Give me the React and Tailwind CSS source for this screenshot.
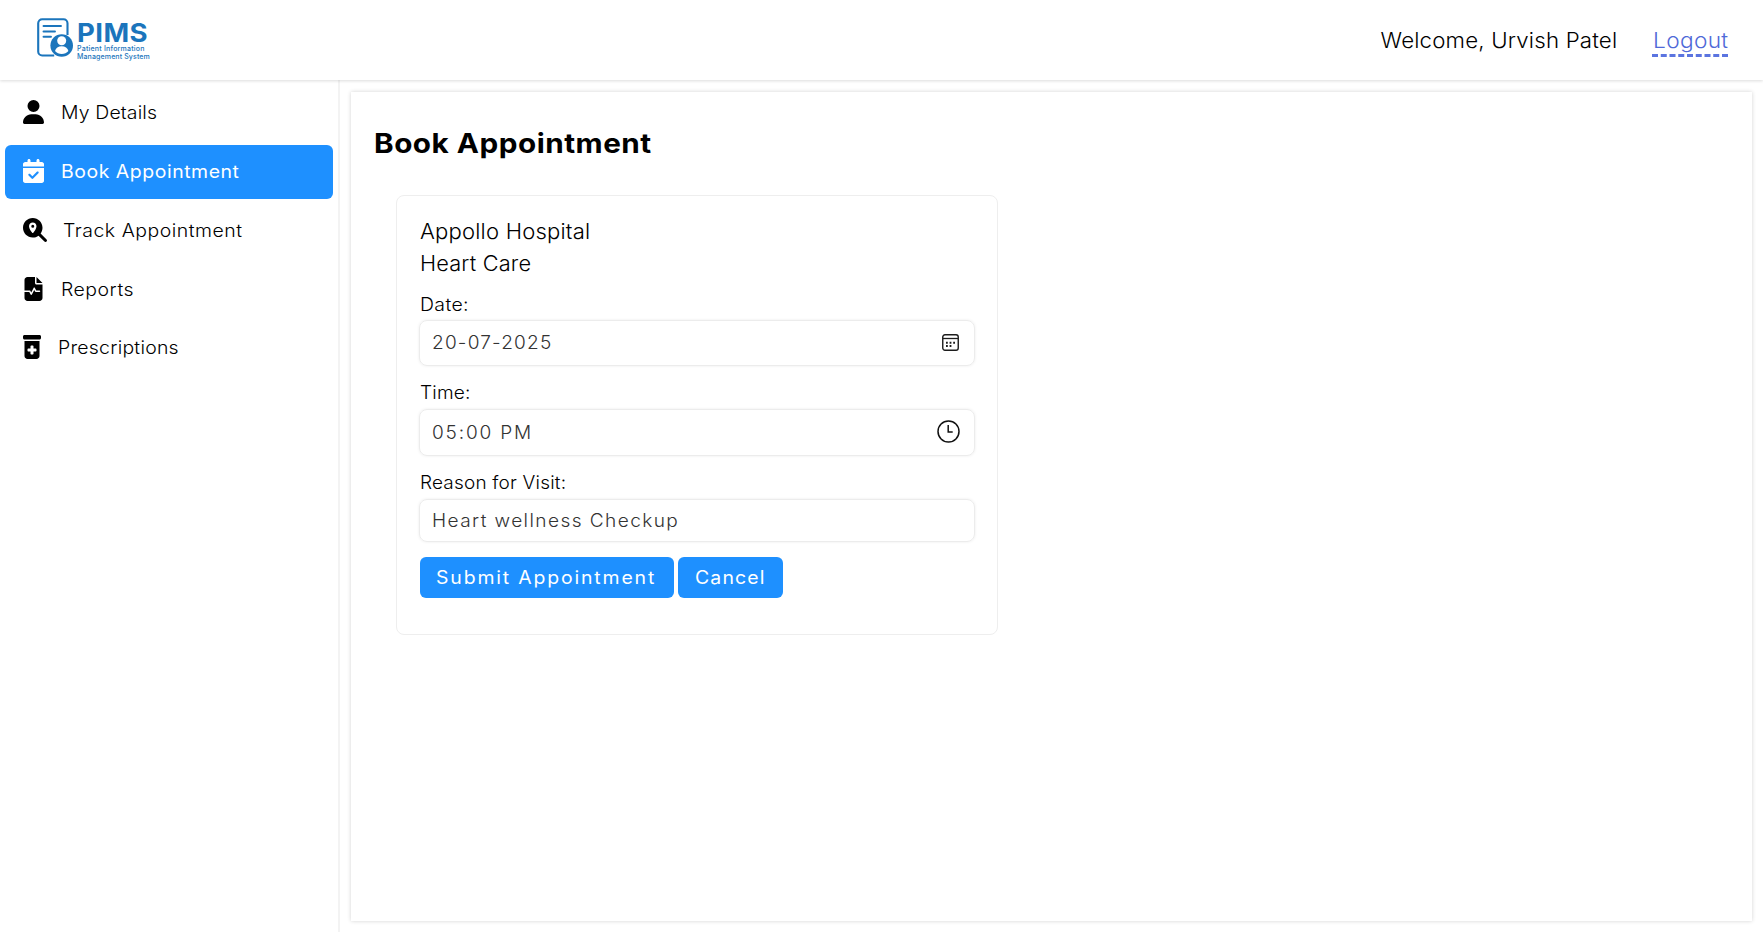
import {
  FaUser,
  FaCalendarCheck,
  FaMagnifyingGlassLocation,
  FaFileWaveform,
  FaPrescriptionBottleMedical,
} from "react-icons/fa6";

const NAV = [
  { label: "My Details", Icon: FaUser, box: "w-[38px]", size: "w-[21px]", tracking: "tracking-[0.13px]" },
  { label: "Book Appointment", Icon: FaCalendarCheck, box: "w-[38px]", size: "w-[21px]", tracking: "tracking-[0.5px]", active: true },
  { label: "Track Appointment", Icon: FaMagnifyingGlassLocation, box: "w-[40px]", size: "w-6", tracking: "tracking-[0.48px]" },
  { label: "Reports", Icon: FaFileWaveform, box: "w-[38px]", size: "w-[21px]", tracking: "tracking-[0.47px]" },
  { label: "Prescriptions", Icon: FaPrescriptionBottleMedical, box: "w-[35px]", size: "w-[18px]", tracking: "tracking-[0.22px]" },
];

function Logo() {
  return (
    <div className="flex items-start text-[#1b75bc]">
      <svg width="37" height="39" viewBox="0 0 37 39" fill="none">
        <path
          d="M30.500 17V5.200a4 4 0 0 0-4-4H5.200a4 4 0 0 0-4 4v28.300a4 4 0 0 0 4 4h12"
          stroke="currentColor"
          strokeWidth="2.1"
        />
        <path d="M6.500 8h17.500M6.500 13.500h11.500M6.500 18.800h7.500" stroke="currentColor" strokeWidth="1.9" strokeLinecap="round" />
        <circle cx="24.700" cy="27.500" r="11.300" fill="currentColor" />
        <circle cx="24.700" cy="22.800" r="4.500" fill="#fff" />
        <path d="M18 33c.7-3.200 3.300-4.800 6.700-4.800s6 1.600 6.700 4.800c-1.700 1.900-4 3-6.700 3s-5-1.100-6.700-3Z" fill="#fff" />
      </svg>
      <div className="flex flex-col pt-[2px] pl-[3px]">
        <span className="h-[25px] origin-left scale-x-[1.06] text-[26px] leading-[26px] font-bold tracking-[0.4px]">PIMS</span>
        <span className="h-[8px] text-[7px] leading-[8px] font-medium tracking-[0.22px] whitespace-nowrap">Patient Information</span>
        <span className="h-[8px] text-[7px] leading-[8px] font-medium tracking-[0.13px] whitespace-nowrap">Management System</span>
      </div>
    </div>
  );
}

function Header() {
  return (
    <header className="relative flex h-20 shrink-0 items-start justify-between bg-white pr-[35px] pl-[37px] shadow-[0_1px_3px_rgba(0,0,0,0.14)]">
      <div className="pt-[18px]">
        <Logo />
      </div>
      <div className="flex items-start pt-[25px] text-[21px] leading-8">
        <span className="mr-[35px] origin-right scale-x-[1.06] tracking-[0.17px]">Welcome, Urvish Patel</span>
        <a href="#" className="h-[32px] w-[76px] border-b-[3px] border-dashed border-[#5b74e0] pl-px text-[#4f69d8]">
          <span className="block origin-left scale-x-[1.08] tracking-[0.3px]">Logout</span>
        </a>
      </div>
    </header>
  );
}

function Sidebar() {
  return (
    <nav className="flex w-[340px] shrink-0 flex-col gap-[5px] border-r-2 border-[#f3f3f3] pt-[6.300px] pr-[4.600px] pl-[5.400px]">
      {NAV.map(({ label, Icon, box, size, tracking, active }) => (
        <a
          key={label}
          href="#"
          className={`flex h-[53.800px] shrink-0 items-center rounded-md pl-[17.600px] text-lg ${tracking} ${active ? "bg-[#1e90ff] font-normal text-white" : "text-black"}`}
        >
          <span className={`flex shrink-0 pb-[2px] ${box}`}>
            <Icon className={`h-6 ${size}`} />
          </span>
          <span className="origin-left scale-x-[1.08]">{label}</span>
        </a>
      ))}
    </nav>
  );
}

function CalendarIcon() {
  return (
    <svg className="mr-[3px] -mt-[2px]" width="17" height="17" viewBox="0 0 17 17" fill="none" stroke="#1c1c1c">
      <rect x="0.750" y="0.750" width="15.500" height="15.500" rx="2.200" strokeWidth="1.400" />
      <path d="M1 4.500h15" strokeWidth="1.300" />
      <path d="M4 8.700h1.800M7.600 8.700h1.800M11.200 8.700h1.800M4 12h1.800M7.600 12h1.800" strokeWidth="1.900" />
    </svg>
  );
}

function ClockIcon() {
  return (
    <svg className="mr-[1.500px] -mt-[2px]" width="23" height="23" viewBox="0 0 23 23" fill="none" stroke="#111">
      <circle cx="11.500" cy="11.500" r="10.500" strokeWidth="1.500" />
      <path d="M11.200 5v7h4.500" strokeWidth="1.500" />
    </svg>
  );
}

function Field({ label, labelClass, boxClass, value, valueClass, icon }) {
  return (
    <>
      <label className={`block h-[30px] w-fit origin-left leading-[30px] text-black ${labelClass}`}>{label}</label>
      <div
        className={`-ml-px flex w-[556px] items-center justify-between rounded-lg border border-[#ececec] pr-[12px] pl-[12px] text-[#333] shadow-[0_0_3px_rgba(0,0,0,0.08)] ${boxClass}`}
      >
        <span className={`origin-left scale-x-[1.06] ${valueClass}`}>{value}</span>
        {icon}
      </div>
    </>
  );
}

function AppointmentForm() {
  return (
    <section className="mt-[33.500px] ml-[22px] h-[440px] w-[602px] rounded-lg border border-[#eeeeee] pt-[20.500px] pl-[22.600px] text-lg text-black">
      <p className="w-fit origin-left scale-x-[1.05] text-[21px] leading-[31.500px] tracking-[0.19px]">Appollo Hospital</p>
      <p className="w-fit origin-left scale-x-[1.035] text-[21px] leading-[31.500px] tracking-[0.17px]">Heart Care</p>
      <Field
        label="Date:"
        labelClass="mt-[11px] scale-x-[1.08] tracking-[0.35px]"
        boxClass="h-[46px]"
        value="20-07-2025"
        valueClass="tracking-[1.1px]"
        icon={<CalendarIcon />}
      />
      <Field
        label="Time:"
        labelClass="mt-[12px] scale-x-[1.06] tracking-[0.15px]"
        boxClass="mt-[1px] h-[47px]"
        value="05:00 PM"
        valueClass="tracking-[1.7px]"
        icon={<ClockIcon />}
      />
      <Field
        label="Reason for Visit:"
        labelClass="mt-[12px] scale-x-[1.055] tracking-[0.18px]"
        boxClass="mt-[1px] h-[43px]"
        value="Heart wellness Checkup"
        valueClass="tracking-[1.33px]"
      />
      <div className="mt-[15px] flex gap-1 font-normal text-white">
        <button className="h-[41px] w-[254px] rounded-md bg-[#1e90ff] pl-[16px] text-left">
          <span className="block w-fit origin-left scale-x-[1.08] tracking-[1.7px] whitespace-nowrap">Submit Appointment</span>
        </button>
        <button className="h-[41px] w-[105px] rounded-md bg-[#1e90ff] pl-[17.500px] text-left">
          <span className="block w-fit origin-left scale-x-[1.08] tracking-[1.08px]">Cancel</span>
        </button>
      </div>
    </section>
  );
}

export default function App() {
  return (
    <div className="flex h-[932px] w-[1763px] flex-col overflow-hidden bg-white font-[Inter,sans-serif] [font-weight:340] text-black">
      <Header />
      <div className="flex min-h-0 flex-1">
        <Sidebar />
        <main className="mt-[12px] mr-[11px] mb-[11px] ml-[11px] flex-1 pt-[34px] pl-[23px] shadow-[0_0_4px_rgba(0,0,0,0.18)]">
          <h1 className="w-fit origin-left scale-x-[1.1] text-[27px] leading-[35px] font-bold tracking-[0.45px]">Book Appointment</h1>
          <AppointmentForm />
        </main>
      </div>
    </div>
  );
}
